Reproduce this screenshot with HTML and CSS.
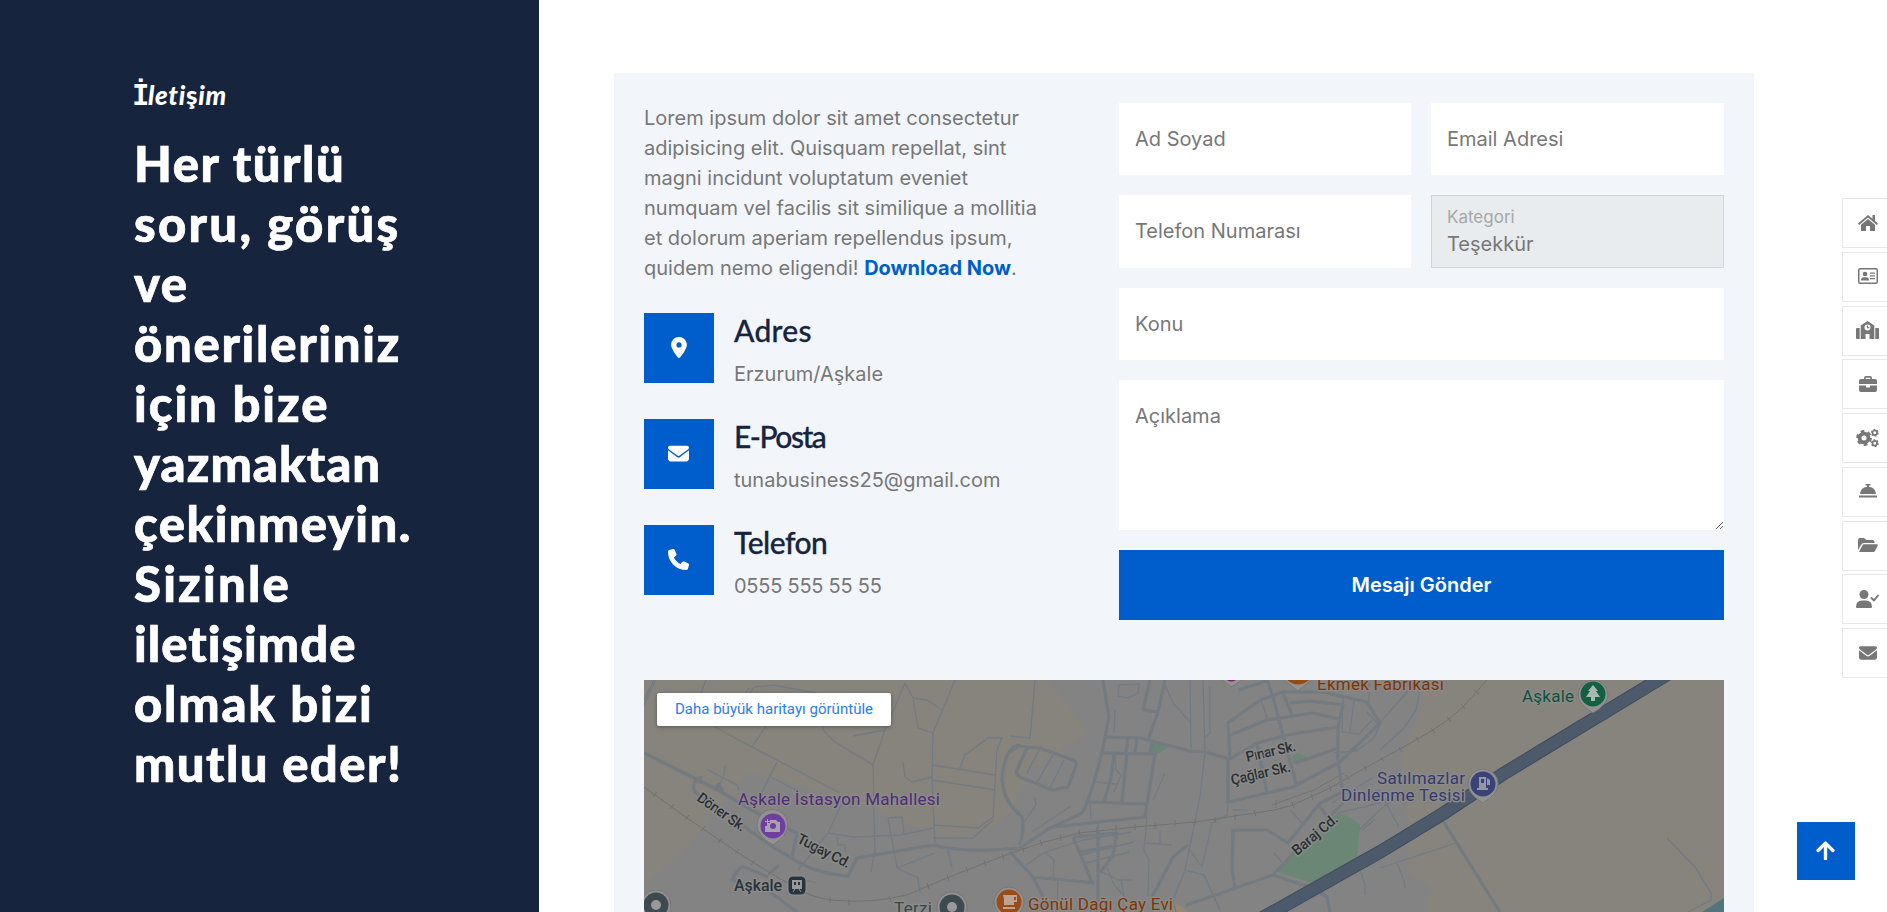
FILE: index.html
```html
<!DOCTYPE html>
<html lang="tr">
<head>
<meta charset="utf-8">
<title>İletişim</title>
<link rel="stylesheet" href="styles.css">
</head>
<body>
<div class="page">
  <aside class="intro">
    <p class="tagline"><span class="tag-i">İ</span>leti<span class="tag-s">ş</span>im</p>
    <h1 class="headline">
      <span class="l1">Her türlü</span>
      <span class="l2">soru, görüş</span>
      <span class="l3">ve</span>
      <span class="l4">önerileriniz</span>
      <span class="l5">için bize</span>
      <span class="l6">yazmaktan</span>
      <span class="l7">çekinmeyin.</span>
      <span class="l8">Sizinle</span>
      <span class="l9">iletişimde</span>
      <span class="l10">olmak bizi</span>
      <span class="l11">mutlu eder!</span>
    </h1>
  </aside>

  <main class="panel">
    <div class="columns">
      <section class="info">
        <p class="lead">Lorem ipsum dolor sit amet consectetur<br>adipisicing elit. Quisquam repellat, sint<br>magni incidunt voluptatum eveniet<br>numquam vel facilis sit similique a mollitia<br>et dolorum aperiam repellendus ipsum,<br>quidem nemo eligendi! <a class="link">Download Now</a>.</p>
        <div class="contact">
          <div class="tile"><svg class="pin-icon" viewBox="0 0 384 512"><path d="M215.700 499.200C267 435 384 279.400 384 192C384 86 298 0 192 0S0 86 0 192c0 87.400 117 243 168.300 307.200c12.300 15.300 35.100 15.300 47.400 0zM192 256a64 64 0 1 1 0-128 64 64 0 1 1 0 128z"/></svg></div>
          <div><h2 class="name n1">Adres</h2><p class="value">Erzurum/Aşkale</p></div>
        </div>
        <div class="contact">
          <div class="tile"><svg class="tile-icon" viewBox="0 0 512 512"><path d="M48 64C21.500 64 0 85.500 0 112c0 15.100 7.100 29.300 19.200 38.400L236.800 313.600c11.400 8.500 27 8.500 38.400 0L492.800 150.400c12.100-9.100 19.200-23.300 19.200-38.400c0-26.500-21.500-48-48-48H48zM0 176V384c0 35.300 28.700 64 64 64H448c35.300 0 64-28.700 64-64V176L294.400 339.200c-22.800 17.100-54 17.100-76.800 0L0 176z"/></svg></div>
          <div><h2 class="name n2">E-Posta</h2><p class="value">tunabusiness25@gmail.com</p></div>
        </div>
        <div class="contact">
          <div class="tile"><svg class="tile-icon" viewBox="0 0 512 512"><path d="M164.900 24.600c-7.700-18.600-28-28.500-47.400-23.200l-88 24C12.100 30.200 0 46 0 64C0 311.400 200.600 512 448 512c18 0 33.800-12.100 38.600-29.500l24-88c5.300-19.400-4.600-39.700-23.200-47.400l-96-40c-16.300-6.800-35.200-2.100-46.300 11.600L304.700 368C234.300 334.700 177.300 277.700 144 207.300L193.300 167c13.700-11.200 18.400-30 11.600-46.300l-40-96z"/></svg></div>
          <div><h2 class="name n3">Telefon</h2><p class="value phone">0555 555 55 55</p></div>
        </div>
      </section>

      <form class="form">
        <input class="field" type="text" placeholder="Ad Soyad">
        <input class="field" type="text" placeholder="Email Adresi">
        <input class="field tall" type="text" placeholder="Telefon Numarası">
        <div class="category"><span class="category-label">Kategori</span><span>Teşekkür</span></div>
        <input class="field wide" type="text" placeholder="Konu">
        <textarea class="field area wide" placeholder="Açıklama"></textarea>
        <button class="submit wide" type="button">Mesajı Gönder</button>
      </form>
    </div>

    <div class="map">
      <svg class="map-art" viewBox="0 0 1080 232">
        <rect width="1080" height="232" fill="#838383"/>
        <g fill="#86847c">
          <path d="M0 0H405L443 52 383 92 368 132 345 150 300 158 262 142 180 112 105 92 45 165 0 205Z"/>
          <path d="M780 0H1080V232H780L787 208 762 192 765 150 756 95 762 60 780 25Z"/>
          <path d="M515 232 530 222 545 232Z" fill="#948873"/>
        </g>
        <path d="M633 192 694 133Q717 140 716 148L713 178 668 203Z" fill="#6c8676"/>
        <path d="M506 72 509 62 525 67 515 73ZM649 82 648 76 654 73 667 78Z" fill="#6c8676"/>
        <g class="lane">
          <path d="M0 20 10 0M0 25 12 0M55 18 62 0M102 18 110 7 130 5 172 13 170 18M261 3 241 50 229 85 231 173M261 3 269 18 274 48 289 53 288 100 291 163M311 0 289 53M269 18 283 20 298 30M71 47 108 67 196 113M179 42 179 50 191 62 229 85M133 82 118 112M108 67 143 15M81 42 105 8M127 97 152 110"/>
          <path d="M289 85 351 95M289 100 351 110M316 88 321 75 344 58 358 58 353 70 349 137 334 148 289 145M289 158 329 158 349 140M198 123 184 153 154 190M184 153 209 157 256 155 289 148M244 138 258 137 260 154M244 138 253 188 274 198 276 213M253 188 291 173M303 167 308 187M193 157 194 165 201 165 201 172M64 90 93 105 95 110M81 85 80 95 74 108M259 82 261 97 268 102 288 97M209 56 241 50M230 173 227 192M148 196 172 203"/>
          <path d="M391 0 386 58 366 56M471 30 470 53M474 14 475 5 495 4 494 13 484 18 474 16ZM519 0 529 23 546 42M546 0 547 68M559 0 561 72 556 117 541 190 529 220 532 232M566 7 566 53 561 58M521 93 509 120M584 122 583 135 568 143 558 187 546 170M541 190 560 195 576 230M617 20 623 38M699 17 698 52 715 54 730 38M710 20 706 52M723 32 735 45M725 22V0M690 73 712 71 730 58 738 40 765 10M736 70 760 48 772 30 778 0M471 75 472 90 477 95 470 112M452 102 472 104M446 122 447 139M391 117 392 125 378 145M427 126 388 152M516 150 516 163M501 163 528 165"/>
          <path d="M401 172 410 180 409 200M382 185 401 172 440 160 487 152M437 175 490 162M441 183 485 172M458 192 475 200 487 200M477 200 480 215M463 188 470 205 482 218M503 137 502 150 500 170 505 180 504 217M454 142 454 150M589 130 604 130M632 120V128M646 130 660 145M414 200 413 232M630 173 638 182M710 190 716 190 721 205V215M715 150 738 128 758 114M700 120 736 110 748 135 755 147M688 123 728 98M694 133 740 122"/>
          <path d="M736 188 812 163M753 183 760 201 761 208M1023 158 1051 187 1067 213 1067 220 1044 232M713 178 770 150M718 150 731 139"/>
        </g>
        <g class="rail">
          <path d="M0 107 43 138 93 172 126 193 156 210Q170 218 188 220 226 224 263 215L303 198 341 183 376 170 397 163 435 153 491 147 551 142 611 133Q630 131 649 125L686 108 721 88 756 69 789 50 805 39 819 27 843 0M628 125 670 110 700 93"/>
          <path d="M9 117 13 112M26 129 30 124M41 140 45 135M57 151 61 146M74 163 78 158M91 174 95 169M107 185 111 180M124 195 128 190M186 217V223M205 219V225M245 216 247 222M283 203 285 209M303 195 305 201M322 187 324 193M340 180 342 186M358 174 360 180M378 166 380 172M396 160 398 166M416 155 417 161M435 150 436 156M453 147V153M472 145V151M491 144V150M511 143V149M531 140V146M551 139V145M571 137V143M591 134V140M610 130 612 136M648 122 650 128M667 114 669 120M685 105 687 111M702 95 705 100M720 86 723 91M737 77 740 82M755 67 758 72M772 57 775 62M787 48 791 53M803 37 807 42M817 24 821 29M830 10 835 14"/>
        </g>
        <g class="street">
          <path d="M0 73 74 110 113 133 153 153 148 177M58 97Q46 102 51 112L129 167 156 183Q175 194 204 196L213 178 289 165Q325 174 376 168L403 150 438 133Q445 122 458 73L461 57 465 37 459 0M376 65Q360 66 358 100 360 122 376 135M70 110 75 104 79 111"/>
          <path d="M383 68 373 90Q371 94 376 97L408 110 424 107 432 86Q433 82 429 80L396 68 374 66 366 72M366 125 378 137Q381 150 375 165M366 172 389 197 399 217 401 232M389 197 451 203"/>
          <path class="thin" d="M396 68 383 93M409 75 393 102M420 80 406 108"/>
          <path d="M461 57 496 58 546 71 561 72 586 79 584 43 616 20 639 12 679 12 723 22 736 43 696 82 649 107 623 113 584 122V79M586 55 623 40 668 33 696 39M646 23 666 21 699 25 694 47V82L699 112M623 0 629 17 639 55 653 107M639 13 648 35M584 80 613 63 643 55 694 47M694 68 666 78 650 83M595 10 616 3 624 0M613 63 623 113"/>
          <path d="M458 73 511 74 503 124 501 137 409 147 403 150M444 122 503 124M483 73 478 122M484 58 482 73M493 58 491 73M470 75 467 98 460 122M499 30 506 0M499 30 514 32 521 0M504 60 514 32M509 60 506 72"/>
          <path d="M454 150V232M429 157 448 202M429 157 473 153 469 175 456 193M435 172 470 166M544 165 529 177 508 217M542 225 586 210 629 195 666 207 683 217 686 232M588 190 589 150 623 150 644 163 676 123 699 112M588 190 591 207M629 195 643 180 699 123M675 125 684 138M799 141 856 232"/>
          <path d="M124 197 100 187Q95 186 88 200L126 212 153 232M126 193 135 185"/>
        </g>
        <path class="highway-edge" d="M600 248 629 232 736 172 800 133 859 94 1014 0 1040-16"/>
        <path class="highway" d="M600 248 629 232 736 172 800 133 859 94 1014 0 1040-16"/>
        <path d="M1058 232 1080 218V232Z" fill="#52757c"/>
        <g class="pins">
          <path d="M129 165Q113 156 113 145A15 15 0 0 1 144 145Q143 156 129 165M839 123Q824 114 824 104A15 15 0 0 1 854 104Q854 114 839 123M949 33Q934 24 934 15A15 15 0 0 1 964 15Q964 24 949 33M641-1V1L654 11 668-1M577-1 587 7 600-1"/>
          <circle cx="12" cy="225" r="15"/><circle cx="308" cy="227" r="15"/><circle cx="365" cy="222" r="15"/>
        </g>
        <circle cx="129" cy="146" r="12.500" fill="#6e3f9e"/>
        <path d="M121 146H123V143H126V140H132L134 142H136V152H121ZM123 139H124V141H126V142H124V144H123V142H121V141H123Z" fill="#aaa1b2"/><circle cx="129" cy="146" r="3" fill="#6e3f9e"/>
        <circle cx="839" cy="104" r="12.500" fill="#3b4278"/>
        <path d="M835 97H842V108H844V110H833V108H835ZM843 98 846 100V105H843Z" fill="#9698aa"/><rect x="837" y="99" width="3" height="4" fill="#3b4278"/>
        <circle cx="949" cy="14" r="12.500" fill="#155f43"/>
        <path d="M949 5 954 11H952L956 17H951V21H947V17H942L946 11H944Z" fill="#a9b8b0"/>
        <path d="M643 0Q654 9 665 0Z" fill="#964a14"/><path d="M583 0H592Q587 3 583 0" fill="#8e1a6b"/>
        <circle cx="365" cy="222" r="12.500" fill="#9a4d18"/>
        <path fill-rule="evenodd" d="M359 215H373V222H370V225H360V219ZM370 217V220H372V217ZM359 227H371V229H359Z" fill="#bda394"/>
        <circle cx="12" cy="225" r="12.500" fill="#3d4a50"/><circle cx="12" cy="225" r="5" fill="#999"/>
        <circle cx="308" cy="227" r="12.500" fill="#3d4a50"/><circle cx="308" cy="227" r="5" fill="#999"/>
        <rect x="144" y="196" width="18" height="19" rx="5" fill="#27333d" stroke="#929292"/>
        <path d="M148 200H158V209H148Z" fill="#999"/><path d="M150 202H152V205H150ZM154 202H156V205H154Z" fill="#27333d"/><path d="M149 212 151 209M157 212 155 209" stroke="#999"/>
        <g class="map-text">
          <text x="94" y="125" textLength="202" fill="#4f2b78">Aşkale İstasyon Mahallesi</text>
          <text class="strong" x="90" y="211" textLength="48">Aşkale</text>
          <text x="250" y="234" textLength="38" fill="#39454b">Terzi</text>
          <text x="384" y="230" textLength="145" fill="#7c3509">Gönül Dağı Çay Evi</text>
          <text x="673" y="10" textLength="127" fill="#7c3509">Ekmek Fabrikası</text>
          <text x="733" y="104" textLength="88" fill="#343a70">Satılmazlar</text>
          <text x="697" y="121" textLength="124" fill="#343a70">Dinlenme Tesisi</text>
          <text x="878" y="22" textLength="52" fill="#0f5138">Aşkale</text>
          <text class="road" transform="translate(52 120) rotate(35)" textLength="56">Döner Sk.</text>
          <text class="road" transform="translate(152 162) rotate(27)" textLength="58">Tugay Cd.</text>
          <text class="road" transform="translate(603 82) rotate(-13)" textLength="51">Pınar Sk.</text>
          <text class="road" transform="translate(588 105) rotate(-13)" textLength="61">Çağlar Sk.</text>
          <text class="road" transform="translate(653 176) rotate(-40)" textLength="55">Baraj Cd.</text>
        </g>
      </svg>
      <a class="map-link">Daha büyük haritayı görüntüle</a>
    </div>
  </main>
</div>

<nav class="rail-nav">
  <a class="nav-item"><svg viewBox="0 0 20 16"><path d="M10 0 0 8.500 1.200 10 10 2.500 18.800 10 20 8.500 17 6V0H14.500V3.800ZM3 9.700 10 3.900 17 9.700V16H12V11H8V16H3Z"/></svg></a>
  <a class="nav-item"><svg viewBox="0 0 20 16"><path fill-rule="evenodd" d="M2 0H18Q20 0 20 2V14Q20 16 18 16H2Q0 16 0 14V2Q0 0 2 0M1.500 2V14Q1.500 14.500 2 14.500H18Q18.500 14.500 18.500 14V2Q18.500 1.500 18 1.500H2Q1.500 1.500 1.500 2"/><circle cx="7" cy="6" r="2.300"/><path d="M3 12.500Q3 9.300 6 9.300H8Q11 9.300 11 12.500ZM12 4.500H17V5.700H12ZM12 7.300H17V8.500H12ZM12 10H17V11.200H12Z"/></svg></a>
  <a class="nav-item"><svg class="broad" viewBox="0 0 23 18"><path fill-rule="evenodd" d="M4.700 18V4.500L11.500 0 18.300 4.500V18H13.500V13H9.500V18ZM11.500 3.500A3 3 0 1 0 11.500 9.500 3 3 0 0 0 11.500 3.500M0 8Q0 7 1 7H3.700V18H1Q0 18 0 17ZM19.300 7H22Q23 7 23 8V17Q23 18 22 18H19.300ZM11 4.500H12V6.300H13.500V7.300H11Z"/></svg></a>
  <a class="nav-item"><svg class="slim" viewBox="0 0 18 16"><path fill-rule="evenodd" d="M5 3V2Q5 0 7 0H11Q13 0 13 2V3H16Q18 3 18 5V8H0V5Q0 3 2 3ZM6.700 3H11.300V1.700H6.700ZM0 9.500H7V11.500H11V9.500H18V14Q18 16 16 16H2Q0 16 0 14Z"/></svg></a>
  <a class="nav-item"><svg class="broad" viewBox="0 0 23 18"><g fill="none" stroke="#777"><circle cx="8" cy="9" r="4.400" stroke-width="3.800"/><circle cx="8" cy="9" r="6.700" stroke-width="2.400" stroke-dasharray="3.700 3.316"/><circle cx="18.800" cy="3.800" r="2.300" stroke-width="1.700"/><circle cx="18.800" cy="3.800" r="3.300" stroke-width="1.200" stroke-dasharray="1.800 1.655"/><circle cx="18.800" cy="14.200" r="2.300" stroke-width="1.700"/><circle cx="18.800" cy="14.200" r="3.300" stroke-width="1.200" stroke-dasharray="1.800 1.655"/></g></svg></a>
  <a class="nav-item"><svg class="slim" viewBox="0 0 18 16"><path d="M6.500 1H11.500V2.500H10V3.700Q16.500 4.500 17 11H1Q1.500 4.500 8 3.700V2.500H6.500ZM0 12.500H18V14.500H0Z"/></svg></a>
  <a class="nav-item"><svg viewBox="0 0 20 16"><path d="M0 13V3Q0 1 2 1H6L8.500 3H14.500Q16.500 3 16.500 5V6H6Q4 6 3 8ZM1 15 4.300 8.500Q4.800 7.300 6 7.300H19Q20.200 7.300 19.700 8.500L17 14Q16.500 15 15.500 15Z"/></svg></a>
  <a class="nav-item"><svg class="broad" viewBox="0 0 23 18"><circle cx="8" cy="4.500" r="4.500"/><path d="M0 17Q0 10.500 6 10.500H10Q16 10.500 16 17 16 18 15 18H1Q0 18 0 17"/><path d="M15.500 8 18 10.500 22 5.500" fill="none" stroke="#777" stroke-width="2" stroke-linecap="round" stroke-linejoin="round"/></svg></a>
  <a class="nav-item"><svg class="slim" viewBox="0 0 512 448"><path d="M48 32C21.500 32 0 53.500 0 80c0 15.100 7.100 29.300 19.200 38.400L236.800 281.600c11.400 8.500 27 8.500 38.400 0L492.800 118.400c12.100-9.100 19.200-23.300 19.200-38.400c0-26.500-21.500-48-48-48H48zM0 144V352c0 35.300 28.700 64 64 64H448c35.300 0 64-28.700 64-64V144L294.400 307.200c-22.800 17.100-54 17.100-76.800 0L0 144z"/></svg></a>
</nav>
<a class="to-top"><svg viewBox="0 0 18 18"><path d="M9 17V2M2 9 9 2 16 9" fill="none" stroke="#fff" stroke-width="3.200" stroke-linecap="round" stroke-linejoin="round"/></svg></a>
</body>
</html>
```
FILE: styles.css
```css
* { box-sizing: border-box; }
html, body { height: 100%; }
body { margin: 0; overflow: hidden; background: #fff; color: #777; font: 20px/30px Inter, sans-serif; }
h1, h2, p { margin: 0; }

.page { display: flex; height: 912px; overflow: hidden; }
.intro { flex: none; width: 539px; padding: 80px 0 0 134px; background: #17243d; color: #fff; }
.tagline { height: 30px; margin: 0 0 23px -2px; font: italic 900 26px/30px Lato, sans-serif; letter-spacing: .7px; white-space: nowrap; font-variant-ligatures: none; }
.tag-i { font: 700 29px/30px "DejaVu Sans Mono", monospace; letter-spacing: -1.500px; }
.tag-s { font-style: normal; }
.headline { font: 900 49px/60px Lato, sans-serif; -webkit-text-stroke: .7px #fff; font-variant-ligatures: none; }
.headline span { display: block; width: max-content; white-space: nowrap; }
.l1 { letter-spacing: 1.550px; }
.l2 { letter-spacing: 2.300px; }
.l3 { letter-spacing: 1.500px; }
.l4 { letter-spacing: 1.700px; }
.l5 { letter-spacing: 1.950px; }
.l6 { letter-spacing: 1.050px; }
.l7 { letter-spacing: 1.450px; }
.l8 { letter-spacing: 2.200px; }
.l9 { letter-spacing: 1px; }
.l10 { letter-spacing: 1.800px; }
.l11 { letter-spacing: 1.450px; }

.panel { flex: none; width: 1140px; height: 900px; margin: 73px 0 0 75px; padding: 30px; background: #f2f6fb; }
.columns { display: flex; justify-content: space-between; height: 577px; }
.info { width: 440px; }
.lead { margin-bottom: 30px; white-space: nowrap; }
.link { color: #005ecc; font-weight: 700; }
.contact { display: flex; gap: 20px; height: 70px; margin-bottom: 36px; }
.tile { display: grid; place-items: center; flex: none; width: 70px; height: 70px; padding: 0 1px 1px 0; background: #005ecc; }
.tile svg { fill: #fff; }
.tile-icon { width: 21px; height: 21px; }
.pin-icon { width: 16px; height: 21px; }
.name { width: max-content; height: 36px; margin-bottom: 10px; color: #17243d; font: 500 30px/34px Lato, sans-serif; -webkit-text-stroke: .3px #17243d; }
.n1 { letter-spacing: .3px; }
.n2 { letter-spacing: -1.500px; }
.n3 { letter-spacing: -.5px; }
.phone { letter-spacing: -.25px; }

.form { display: grid; grid-template-columns: 292px 293px; grid-template-rows: 72px 73px 72px 150px 70px; gap: 20px; width: 605px; align-content: start; }
.wide { grid-column: 1 / -1; }
.field { width: 100%; height: 100%; padding: 0 16px; border: 0; border-radius: 0; background: #fff; color: #777; font: 20px/30px Inter, sans-serif; outline: 0; }
.field::placeholder { color: #777; opacity: 1; }
.tall { padding-bottom: 2px; }
.area { padding: 21px 16px; resize: vertical; }
.category { display: flex; flex-direction: column; padding: 9px 15px; border: 1px solid #ced4da; background: #e9ecef; line-height: 30px; }
.category-label { height: 24px; color: #a5a7a9; font-size: 17px; line-height: 24px; }
.submit { border: 0; background: #005ecc; color: #fff; font: 600 20px/30px Inter, sans-serif; }

.map { position: relative; height: 232px; overflow: hidden; }
.map-art { display: block; width: 1080px; height: 232px; }
.map-link { position: absolute; left: 13px; top: 13px; width: 234px; height: 33px; border-radius: 2px; background: #fff; color: #2a7de9; font: 15.050px/33px Roboto, sans-serif; text-align: center; box-shadow: 0 1px 4px #0005; white-space: nowrap; }
.lane { fill: none; stroke: #747a82; stroke-width: 1.300; }
.street { fill: none; stroke: #737a80; stroke-width: 3.200; stroke-linejoin: round; }
.thin { stroke-width: 1.300; }
.rail { fill: none; stroke: #717171; stroke-width: 1; }
.highway-edge { fill: none; stroke: #3e4d5e; stroke-width: 13.500; }
.highway { fill: none; stroke: #4d5a6b; stroke-width: 11.500; }
.pins { fill: #929292; stroke: #777; stroke-width: 1; }
.map-text { font: 17px Roboto, sans-serif; paint-order: stroke; stroke: #8a8a88; stroke-width: 3; stroke-linejoin: round; }
.strong { fill: #27333d; font-size: 16px; font-weight: 500; }
.road { fill: #292f35; font-size: 14.500px; font-weight: 500; }

.rail-nav { position: fixed; right: 0; top: 198px; display: flex; flex-direction: column; gap: 3.750px; }
.nav-item { display: flex; align-items: center; width: 45px; height: 50px; padding: 0 0 1px 15px; border: 1px solid #e8e8e8; border-right: 0; background: #fff; }
.nav-item svg { flex: none; width: 20px; height: 16px; fill: #777; }
.nav-item .broad { width: 23px; height: 18px; margin-left: -2px; }
.nav-item .slim { width: 18px; height: 16px; margin-left: 1px; }
.to-top { position: fixed; right: 32px; bottom: 32px; display: grid; place-items: center; width: 58px; height: 58px; padding: 0 1px 1px 0; background: #005ecc; }
.to-top svg { width: 19px; height: 19px; }
```
